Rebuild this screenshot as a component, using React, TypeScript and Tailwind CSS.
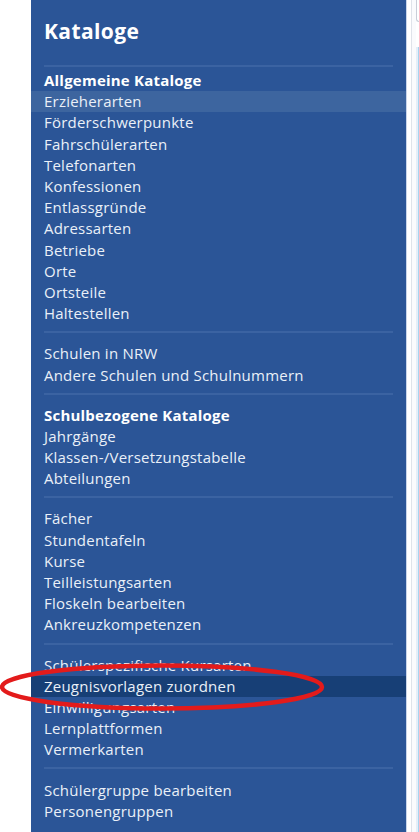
import React from "react";

type Item = { label: string; bold?: boolean; state?: "hover" | "selected" };

const groups: Item[][] = [
  [
    { label: "Allgemeine Kataloge", bold: true },
    { label: "Erzieherarten", state: "hover" },
    { label: "Förderschwerpunkte" },
    { label: "Fahrschülerarten" },
    { label: "Telefonarten" },
    { label: "Konfessionen" },
    { label: "Entlassgründe" },
    { label: "Adressarten" },
    { label: "Betriebe" },
    { label: "Orte" },
    { label: "Ortsteile" },
    { label: "Haltestellen" },
  ],
  [{ label: "Schulen in NRW" }, { label: "Andere Schulen und Schulnummern" }],
  [
    { label: "Schulbezogene Kataloge", bold: true },
    { label: "Jahrgänge" },
    { label: "Klassen-/Versetzungstabelle" },
    { label: "Abteilungen" },
  ],
  [
    { label: "Fächer" },
    { label: "Stundentafeln" },
    { label: "Kurse" },
    { label: "Teilleistungsarten" },
    { label: "Floskeln bearbeiten" },
    { label: "Ankreuzkompetenzen" },
  ],
  [
    { label: "Schülerspezifische Kursarten" },
    { label: "Zeugnisvorlagen zuordnen", state: "selected" },
    { label: "Einwilligungsarten" },
    { label: "Lernplattformen" },
    { label: "Vermerkarten" },
  ],
  [{ label: "Schülergruppe bearbeiten" }, { label: "Personengruppen" }],
];

function Row({ item }: { item: Item }) {
  const bg =
    item.state === "hover"
      ? "bg-[#3d659f]"
      : item.state === "selected"
      ? "bg-[#173f76]"
      : "";
  return (
    <div
      className={`h-[21.2px] flex items-center pl-[13px] text-[15px] tracking-[0.22px] leading-none whitespace-nowrap ${
        item.bold ? "font-bold text-white" : "text-[#eaf0f8]"
      } ${bg}`}
    >
      {item.label}
    </div>
  );
}

function Separator() {
  return <div className="mx-[13px] h-[2px] bg-[#3b63a2] mt-[7px] mb-[10px]" />;
}

export default function App() {
  return (
    <div
      className="w-[419px] h-[832px] bg-white flex overflow-hidden relative"
      style={{ fontFamily: '"Open Sans", "Noto Sans", sans-serif' }}
    >
      <div className="w-[31px] shrink-0" />
      <div className="w-[375px] shrink-0 bg-[#2b5597] flex flex-col">
        <div className="pl-[13px] pt-[17px] h-[65px] text-white font-bold text-[21px] tracking-[0.4px] leading-[28px]">
          Kataloge
        </div>
        <div className="mx-[13px] h-[2px] bg-[#3b63a2] mb-[3px]" />
        {groups.map((g, i) => (
          <React.Fragment key={i}>
            {i > 0 && <Separator />}
            <div className="flex flex-col">
              {g.map((it) => (
                <Row key={it.label} item={it} />
              ))}
            </div>
          </React.Fragment>
        ))}
      </div>
      {/* neighbouring window edge */}
      <div className="flex-1 flex">
        <div className="w-[1px] bg-[#c9d5ea]" />
        <div className="w-[4px] bg-white" />
        <div className="w-[1px] bg-[#dfe3ea]" />
        <div className="w-[4px] bg-[#fafbfd]" />
        <div className="flex-1 flex flex-col">
          <div className="h-[22px] border-l border-b border-[#c9ced8] rounded-bl-[3px] bg-white" />
          <div className="h-[25px]" />
          <div className="flex-1 flex">
            <div className="w-[2px] bg-[#e5eef8]" />
            <div className="flex-1 bg-[#a9d3ef]" />
          </div>
        </div>
      </div>
      {/* red marker ellipse */}
      <svg
        className="absolute left-0 top-0 pointer-events-none"
        width="419"
        height="832"
        viewBox="0 0 419 832"
      >
        <ellipse
          cx="162"
          cy="687"
          rx="160"
          ry="21.5"
          fill="none"
          stroke="#e31b1b"
          strokeWidth="4.5"
        />
      </svg>
    </div>
  );
}
